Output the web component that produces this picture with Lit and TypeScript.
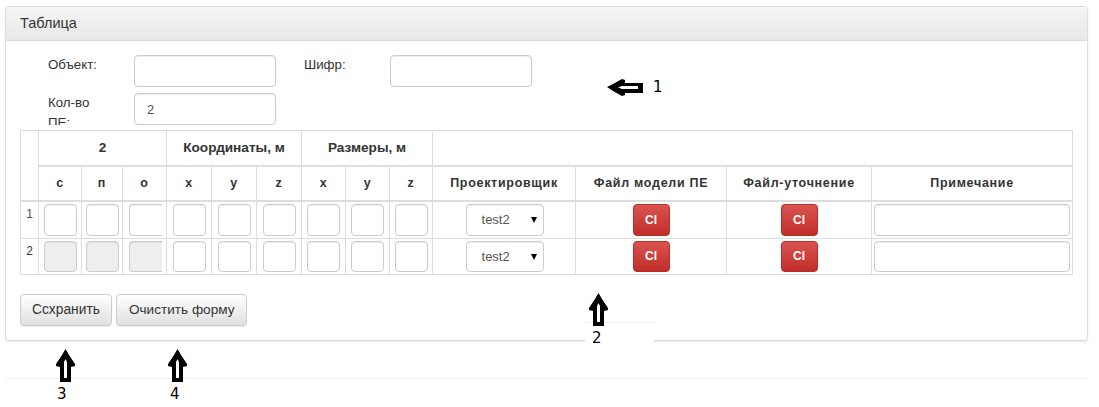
import { LitElement, html, css, svg } from "lit";
import { customElement } from "lit/decorators.js";

const COLS = [18, 43, 41, 44, 45, 45, 45, 44, 44, 43, 143, 151, 145, 201];
const SUB = ["с", "п", "о", "x", "y", "z", "x", "y", "z"];

const upArrow = svg`<path d="M9.5 0 L13 6 L19 15 L19 17 L15 18 L15 33 L4 33 L4 18 L0 17 L0 15 L6 6 Z" fill="#000"/><path d="M9.5 10 L11 13 L11 29 L8 29 L8 13 Z" fill="#fff"/>`;
const leftArrow = svg`<path d="M0 8 L6 5 L15 0 L18 1 L18 4 L36 4 L36 14 L18 14 L18 16 L15 17 L6 12 Z" fill="#000"/><path d="M11 8.5 L15 7 L31 7 L31 10 L15 10 Z" fill="#fff"/>`;

@customElement("app-root")
export class AppRoot extends LitElement {
  static styles = css`
    :host {
      display: block;
      position: relative;
      min-height: 407px;
      background: #fff;
      font-family: "Liberation Sans", Arial, sans-serif;
      font-size: 13px;
      color: #333;
      overflow: hidden;
    }
    .panel {
      margin: 6px 11px 0 5px;
      border: 1px solid #ddd;
      border-radius: 4px;
      box-shadow: 0 1px 2px rgba(0, 0, 0, 0.1);
      background: #fff;
    }
    .head {
      height: 34px;
      box-sizing: border-box;
      padding: 7px 14px 0;
      border-bottom: 1px solid #ddd;
      border-radius: 3px 3px 0 0;
      background: linear-gradient(#f5f5f5, #e8e8e8);
      font-size: 14.5px;
      line-height: 18px;
    }
    .body {
      padding: 14px 14px 14px;
    }
    .form {
      display: grid;
      grid-template-columns: 86px 142px 28px 86px 142px;
      grid-auto-rows: 32px;
      row-gap: 6px;
      padding-left: 28px;
      margin-bottom: 5px;
    }
    .lbl {
      font-size: 13.3px;
      line-height: 20px;
      height: 32px;
      overflow: hidden;
      width: 62px;
    }
    .spacer { grid-column: 3; }
    input {
      box-sizing: border-box;
      border: 1px solid #ccc;
      border-radius: 4px;
      background: #fff;
      box-shadow: inset 0 1px 1px rgba(0, 0, 0, 0.075);
      font: 13px "Liberation Sans", Arial, sans-serif;
      color: #555;
      padding: 0 12px;
      outline: none;
      display: block;
    }
    .form input { width: 142px; height: 32px; }
    table {
      width: 1053px;
      table-layout: fixed;
      border-collapse: collapse;
    }
    th, td {
      box-sizing: border-box;
      border: 1px solid #ddd;
      padding: 0;
      text-align: center;
    }
    th {
      font-size: 12.5px;
      font-weight: bold;
      color: #333;
    }
    .h1 th { height: 35px; font-size: 13.6px; border-bottom-width: 2px; }
    .h2 th { height: 35px; letter-spacing: 0.7px; border-bottom-width: 2px; }
    .r1 td { height: 38px; }
    .r2 td { height: 36px; }
    .num { font-size: 12px; vertical-align: top; padding-top: 5px; color: #456; }
    .num2 { color: #333; }
    .cell { display: flex; justify-content: center; }
    .cell input { width: 33px; height: 32px; padding: 0; }
    .r2 .cell input { height: 31px; }
    .cell input.dis { background: #eee; }
    .cell input.clip { border-right: none; border-radius: 4px 0 0 4px; margin-left: 1px; }
    .note { padding: 0 3px 0 2px; }
    .note input { width: 196px; height: 32px; }
    .r2 .note input { height: 31px; }
    .select {
      position: relative;
      box-sizing: border-box;
      width: 78px;
      height: 32px;
      margin-left: 1px;
      border: 1px solid #ccc;
      border-radius: 4px;
      box-shadow: inset 0 1px 1px rgba(0, 0, 0, 0.075);
      font-size: 13px;
      line-height: 30px;
      color: #555;
      text-align: left;
      padding-left: 15px;
    }
    .r2 .select { height: 31px; line-height: 29px; }
    .select::after {
      content: "";
      position: absolute;
      left: 64px;
      top: 12px;
      border-left: 3px solid transparent;
      border-right: 3px solid transparent;
      border-top: 6px solid #000;
    }
    .red {
      box-sizing: border-box;
      width: 37px;
      height: 32px;
      border: 1px solid #b92c28;
      border-radius: 4px;
      background: linear-gradient(#d9534f, #c12e2a);
      color: #fff;
      font-size: 12px;
      font-weight: bold;
      line-height: 30px;
      text-align: center;
    }
    .r2 .red { height: 31px; line-height: 29px; }
    .actions {
      display: flex;
      gap: 4px;
      margin-top: 19px;
    }
    .btn {
      box-sizing: border-box;
      height: 32px;
      line-height: 30px;
      padding: 0 11px;
      border: 1px solid #ccc;
      border-radius: 4px;
      background: linear-gradient(#fff, #e0e0e0);
      box-shadow: 0 1px 1px rgba(0, 0, 0, 0.075);
      font-size: 13.8px;
      color: #333;
    }
    .btn + .btn { padding: 0 11px 0 12px; font-size: 13.6px; }
    hr {
      margin: 37px 11px 0 5px;
      border: none;
      border-top: 1px solid #eee;
    }
    .ann { position: absolute; display: block; }
    .n {
      position: absolute;
      font: 15px/18px "DejaVu Sans", sans-serif;
      color: #000;
    }
    .patch {
      position: absolute;
      left: 585px;
      top: 322px;
      width: 69px;
      height: 24px;
      background: #fff;
      border-top: 1px solid #eee;
      box-sizing: border-box;
    }
  `;

  private arrowUp(x: number, y: number) {
    return html`<svg class="ann" style="left:${x}px;top:${y}px" width="19" height="33" viewBox="0 0 19 33">${upArrow}</svg>`;
  }
  private num(t: string, x: number, y: number) {
    return html`<span class="n" style="left:${x}px;top:${y}px">${t}</span>`;
  }

  private row(cls: string, n: number, disabled: boolean) {
    return html`<tr class=${cls}>
      <td class="num ${n === 2 ? "num2" : ""}">${n}</td>
      ${SUB.map(
        (_, i) => html`<td><div class="cell"><input class="${disabled && i < 3 ? "dis" : ""} ${i === 2 ? "clip" : ""}" /></div></td>`
      )}
      <td><div class="cell"><div class="select">test2</div></div></td>
      <td><div class="cell"><div class="red">Cl</div></div></td>
      <td><div class="cell"><div class="red">Cl</div></div></td>
      <td class="note"><input /></td>
    </tr>`;
  }

  render() {
    return html`
      <div class="panel">
        <div class="head">Таблица</div>
        <div class="body">
          <div class="form">
            <div class="lbl">Объект:</div>
            <input />
            <div class="spacer"></div>
            <div class="lbl">Шифр:</div>
            <input />
            <div class="lbl">Кол-во ПЕ:</div>
            <input value="2" />
          </div>
          <table>
            <colgroup>${COLS.map((w) => html`<col style="width:${w}px" />`)}</colgroup>
            <thead>
              <tr class="h1">
                <th rowspan="2"></th>
                <th colspan="3">2</th>
                <th colspan="3">Координаты, м</th>
                <th colspan="3">Размеры, м</th>
                <th colspan="4"></th>
              </tr>
              <tr class="h2">
                ${SUB.map((s) => html`<th>${s}</th>`)}
                <th>Проектировщик</th>
                <th>Файл модели ПЕ</th>
                <th>Файл-уточнение</th>
                <th>Примечание</th>
              </tr>
            </thead>
            <tbody>
              ${this.row("r1", 1, false)} ${this.row("r2", 2, true)}
            </tbody>
          </table>
          <div class="actions">
            <div class="btn">Ссхранить</div>
            <div class="btn">Очистить форму</div>
          </div>
        </div>
      </div>
      <hr />
      <div class="patch"></div>
      <svg class="ann" style="left:607px;top:79px" width="36" height="17" viewBox="0 0 36 17">${leftArrow}</svg>
      ${this.num("1", 653, 78)}
      ${this.arrowUp(589, 293)} ${this.num("2", 592, 329)}
      ${this.arrowUp(56, 349)} ${this.num("3", 57, 385)}
      ${this.arrowUp(168, 349)} ${this.num("4", 170, 385)}
    `;
  }
}
